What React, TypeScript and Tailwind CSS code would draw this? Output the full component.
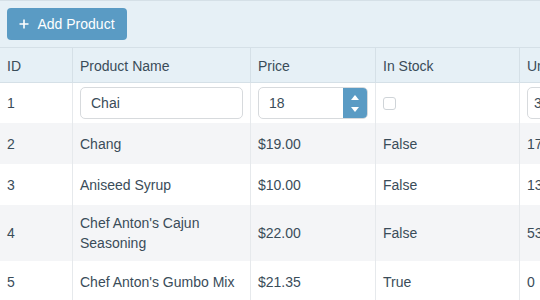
import React from "react";

const rows = [
  { id: "2", name: "Chang", price: "$19.00", stock: "False", units: "17" },
  { id: "3", name: "Aniseed Syrup", price: "$10.00", stock: "False", units: "13" },
  { id: "4", name: "Chef Anton's Cajun Seasoning", price: "$22.00", stock: "False", units: "53" },
  { id: "5", name: "Chef Anton's Gumbo Mix", price: "$21.35", stock: "True", units: "0" },
];

const cols = "grid grid-cols-[72px_178px_125px_144px_100px]";

export default function App() {
  return (
    <div
      className="w-[540px] h-[300px] overflow-hidden bg-white text-[#3a4c59] text-[14px] leading-[20px]"
      style={{ fontFamily: '"Liberation Sans", Arial, sans-serif' }}
    >
      <div className="h-[48px] bg-[#e6f0f6] border-t border-b border-[#d5e0e7] flex items-center px-[7px]">
        <button className="h-[32px] w-[120px] rounded-[4px] bg-[#5a9bc4] text-white flex items-center justify-center gap-[8px] text-[14px]">
          <svg width="10" height="10" viewBox="0 0 10 10">
            <path d="M5 0.5v9M0.5 5h9" stroke="white" strokeWidth="1.6" />
          </svg>
          <span>Add Product</span>
        </button>
      </div>
      <div className="w-[620px]">
        <div className={`${cols} h-[35px] bg-[#e6f0f6] border-b border-[#d5e0e7]`}>
          {["ID", "Product Name", "Price", "In Stock", "Units In Stock"].map((h, i) => (
            <div
              key={h}
              className={`flex items-center px-[7px] pt-[2px] whitespace-nowrap ${i > 0 ? "border-l border-[#d5e0e7]" : ""}`}
            >
              {h}
            </div>
          ))}
        </div>
        <div className={`${cols} h-[40px]`}>
          <div className="flex items-center px-[7px]">1</div>
          <div className="flex items-center px-[7px] border-l border-[#e6e9ec]">
            <div className="h-[32px] w-full rounded-[5px] border border-[#d7dadd] flex items-center px-[10px]">Chai</div>
          </div>
          <div className="flex items-center px-[7px] border-l border-[#e6e9ec]">
            <div className="h-[32px] w-full rounded-[5px] border border-[#d7dadd] flex items-center overflow-hidden">
              <span className="flex-1 px-[10px]">18</span>
              <div className="w-[24px] h-full bg-[#5a9bc4] flex flex-col items-center justify-center gap-[7px]">
                <svg width="8" height="5" viewBox="0 0 8 5"><path d="M4 0L8 5H0z" fill="white" /></svg>
                <svg width="8" height="5" viewBox="0 0 8 5"><path d="M0 0h8L4 5z" fill="white" /></svg>
              </div>
            </div>
          </div>
          <div className="flex items-center px-[7px] border-l border-[#e6e9ec]">
            <div className="w-[13px] h-[13px] rounded-[3px] border border-[#cfd4d8] bg-white" />
          </div>
          <div className="flex items-center px-[7px] border-l border-[#e6e9ec]">
            <div className="h-[32px] w-full rounded-[5px] border border-[#d7dadd] flex items-center px-[6px]">39</div>
          </div>
        </div>
        {rows.map((r, idx) => (
          <div key={r.id} className={`${cols} min-h-[41px] ${idx % 2 === 0 ? "bg-[#f4f5f7]" : "bg-white"}`}>
            <div className="flex items-center px-[7px] py-[8px]">{r.id}</div>
            <div className="flex items-center px-[7px] py-[8px] border-l border-[#e6e9ec]">{r.name}</div>
            <div className="flex items-center px-[7px] py-[8px] border-l border-[#e6e9ec]">{r.price}</div>
            <div className="flex items-center px-[7px] py-[8px] border-l border-[#e6e9ec]">{r.stock}</div>
            <div className="flex items-center px-[7px] py-[8px] border-l border-[#e6e9ec]">{r.units}</div>
          </div>
        ))}
      </div>
    </div>
  );
}
